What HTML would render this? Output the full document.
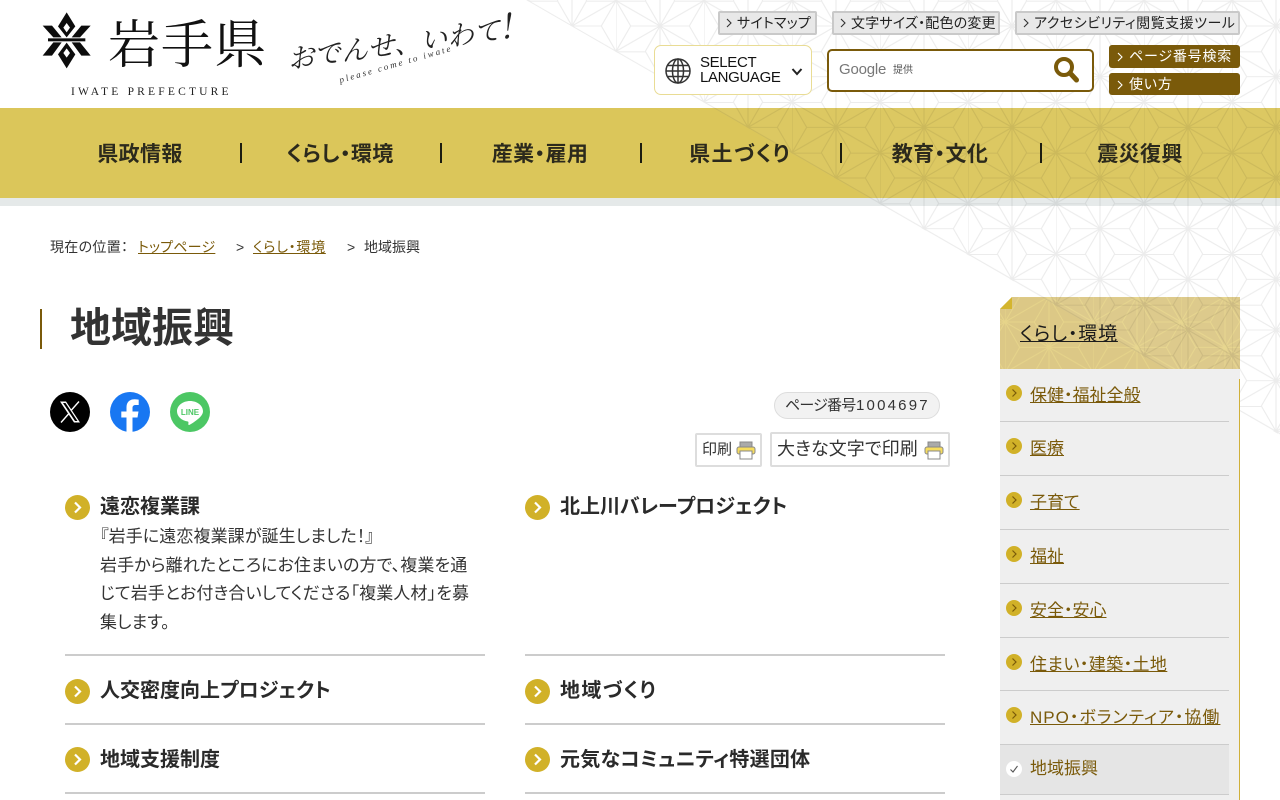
<!DOCTYPE html>
<html lang="ja">
<head>
<meta charset="utf-8">
<title>地域振興 - 岩手県</title>
<style>
html,body{margin:0;padding:0;background:#fff}
body{width:1280px;height:800px;overflow:hidden;position:relative;font-family:"Liberation Sans","Noto Sans CJK JP",sans-serif;color:#333;font-feature-settings:"palt"}
.a{position:absolute;white-space:nowrap}
a{color:inherit}
.tb{position:absolute;top:11px;height:20px;background:#e8e8e8;border:2px solid #c9c9c9;border-radius:2px;font-size:14px;line-height:20px;color:#222;white-space:nowrap;box-sizing:content-box}
.tb svg{position:absolute;left:5px;top:5px}
.tb span{position:absolute;left:17px;top:0}
.bb{position:absolute;left:1109px;width:131px;background:#7a5a0a;border-radius:3px;color:#fff;font-size:14px;white-space:nowrap}
.bb svg{position:absolute;left:7px;top:7px}
.bb span{position:absolute;left:20px;letter-spacing:.8px}
.nav{position:absolute;top:141px;width:200px;text-align:center;font-size:21px;font-weight:700;line-height:28px;color:#2c2a1c;letter-spacing:.4px}
.sep{position:absolute;top:143px;width:2px;height:20px;background:#1c1c10}
.ci{position:absolute;width:25px;height:25px}
.ttl{position:absolute;font-size:20px;font-weight:700;line-height:26px;color:#2a2a2a;white-space:nowrap}
.ln{position:absolute;width:420px;height:2px;background:#ccc}
.bt{position:absolute;left:100px;font-size:17px;line-height:28.5px;color:#333;white-space:nowrap;letter-spacing:.1px}
.si{position:absolute;left:1030px;font-size:17px;line-height:24px;color:#7a5a0a;white-space:nowrap;text-decoration:underline;z-index:5}
.sl{position:absolute;left:1000px;width:229px;height:1px;background:#ccc;z-index:5}
.sb{position:absolute;left:1006px;width:16px;height:16px;z-index:5}
.bc{position:absolute;top:238px;font-size:14px;line-height:18px;color:#333;white-space:nowrap}
</style>
</head>
<body>

<!-- nav bands -->
<div class="a" style="left:0;top:108px;width:1280px;height:90px;background:#dbc65a"></div>
<div class="a" style="left:0;top:198px;width:1280px;height:8px;background:#e5e9e9"></div>

<!-- sidebar header -->
<svg class="a" style="left:1000px;top:297px;z-index:1" width="240" height="72" viewBox="1000 297 240 72">
<defs>
<pattern id="p2" patternUnits="userSpaceOnUse" width="88" height="50.667" x="1005" y="322">
<path stroke="#e6d48a" stroke-width="1" fill="none" d="M0 0V50.67M44 0V50.67M0 0L44 25.33L88 0M0 50.67L44 25.33L88 50.67M14.67 25.33L0 0M14.67 25.33L0 50.67M14.67 25.33H73.33M73.33 25.33L88 0M73.33 25.33L88 50.67M29.33 0H0M29.33 0L44 25.33M58.67 0H88M58.67 0L44 25.33M29.33 50.67H0M29.33 50.67L44 25.33M58.67 50.67H88M58.67 50.67L44 25.33"/>
</pattern>
</defs>
<rect x="1000" y="297" width="240" height="72" fill="#dcc886"/>
<rect x="1000" y="297" width="240" height="72" fill="url(#p2)"/>
<polygon points="1000,297 1012,297 1000,309" fill="#fff"/>
<polygon points="1000,309 1012,297 1012,309" fill="#d4b52e"/>
</svg>

<!-- asanoha overlay -->
<svg class="a" style="left:0;top:0;z-index:2" width="1280" height="800">
<defs>
<pattern id="p1" patternUnits="userSpaceOnUse" width="88" height="50.667" x="0" y="0.67">
<path stroke="#000" stroke-opacity=".075" stroke-width="1.100" fill="none" d="M0 0V50.67M44 0V50.67M0 0L44 25.33L88 0M0 50.67L44 25.33L88 50.67M14.67 25.33L0 0M14.67 25.33L0 50.67M14.67 25.33H73.33M73.33 25.33L88 0M73.33 25.33L88 50.67M29.33 0.500H0M29.33 0L44 25.33M58.67 0.500H88M58.67 0L44 25.33M29.33 50.67L44 25.33M58.67 50.67L44 25.33"/>
</pattern>
</defs>
<polygon points="526,0 1280,0 1280,435" fill="#fff" fill-opacity=".05"/>
<polygon points="526,0 1280,0 1280,435" fill="url(#p1)"/>
</svg>

<!-- logo -->
<svg class="a" style="left:30px;top:5px;z-index:3" width="100" height="70" viewBox="0 0 300 210">
<g fill="#0c0c0c" fill-rule="evenodd">
<path d="M110 22L136 64L110 97L84 64ZM110 54L100 68L110 82L120 68Z"/>
<path d="M110 190L136 148L110 113L84 148ZM110 158L100 144L110 130L120 144Z"/>
<rect x="54" y="100" width="112" height="9"/>
<path d="M38 62H66L95 97H70Z"/><path d="M182 62H154L125 97H150Z"/>
<path d="M38 152H66L95 112H70Z"/><path d="M182 152H154L125 112H150Z"/>
</g>
</svg>
<div class="a" style="left:108px;top:9px;font:400 52px/64px 'Noto Serif CJK SC','Noto Serif CJK JP',serif;color:#111;letter-spacing:1px;z-index:3">岩手県</div>
<div class="a" style="left:71px;top:85px;font:400 11.500px/14px 'Liberation Serif',serif;letter-spacing:3.200px;color:#222;z-index:3">IWATE PREFECTURE</div>
<div class="a" style="left:287px;top:35px;font:italic 400 27px/40px 'Noto Serif CJK JP','Noto Serif CJK SC',serif;color:#222;transform:rotate(-8deg);transform-origin:0 20px;z-index:3">おでんせ、いわて<span style="font-size:34px">!</span></div>
<div class="a" style="left:340px;top:74px;font:italic 400 9px/12px 'Liberation Serif',serif;letter-spacing:2.100px;color:#333;transform:rotate(-16deg);transform-origin:0 8px;z-index:3">please come to iwate</div>

<!-- top buttons -->
<div class="tb" style="left:718px;width:95px;z-index:3"><svg width="8" height="10" viewBox="0 0 8 10"><path d="M2 1l4 4-4 4" fill="none" stroke="#333" stroke-width="1.100"/></svg><span style="letter-spacing:.2px">サイトマップ</span></div>
<div class="tb" style="left:832px;width:164px;z-index:3"><svg width="8" height="10" viewBox="0 0 8 10"><path d="M2 1l4 4-4 4" fill="none" stroke="#333" stroke-width="1.100"/></svg><span style="letter-spacing:.2px">文字サイズ・配色の変更</span></div>
<div class="tb" style="left:1015px;width:221px;z-index:3"><svg width="8" height="10" viewBox="0 0 8 10"><path d="M2 1l4 4-4 4" fill="none" stroke="#333" stroke-width="1.100"/></svg><span style="letter-spacing:.5px">アクセシビリティ閲覧支援ツール</span></div>

<!-- language -->
<div class="a" style="left:654px;top:45px;width:156px;height:48px;background:#fff;border:1px solid #e9dc94;border-radius:7px;z-index:3"></div>
<svg class="a" style="left:664px;top:57px;z-index:4" width="28" height="28" viewBox="0 0 28 28"><g fill="none" stroke="#333" stroke-width="1.500"><circle cx="14" cy="14" r="12"/><ellipse cx="14" cy="14" rx="5.500" ry="12"/><path d="M14 2V26M2 14H26M3.500 8.500H24.500M3.500 19.500H24.500"/></g></svg>
<div class="a" style="left:700px;top:56px;font-size:15px;line-height:14.500px;color:#111;letter-spacing:-.35px;z-index:4">SELECT<br>LANGUAGE</div>
<svg class="a" style="left:791px;top:67px;z-index:4" width="12" height="10" viewBox="0 0 12 10"><path d="M1.500 2L6 7L10.500 2" fill="none" stroke="#222" stroke-width="2"/></svg>

<!-- search -->
<div class="a" style="left:827px;top:49px;width:263px;height:39px;background:#fff;border:2px solid #7a5a0a;border-radius:5px;z-index:3"></div>
<div class="a" style="left:839px;top:60px;font-size:15px;line-height:19px;color:#777;z-index:4;letter-spacing:-.2px">Google</div>
<div class="a" style="left:893px;top:64px;font-size:10px;line-height:14px;color:#555;z-index:4">提供</div>
<svg class="a" style="left:1052px;top:56px;z-index:4" width="27" height="27" viewBox="0 0 27 27"><circle cx="12" cy="11" r="8" fill="none" stroke="#7a5a0a" stroke-width="4"/><path d="M18 17L24.500 24" stroke="#7a5a0a" stroke-width="5" stroke-linecap="round"/></svg>

<div class="bb" style="top:45px;height:23px;z-index:3"><svg width="8" height="10" viewBox="0 0 8 10"><path d="M2 1l4 4-4 4" fill="none" stroke="#fff" stroke-width="1.100"/></svg><span style="line-height:22px">ページ番号検索</span></div>
<div class="bb" style="top:73px;height:22px;z-index:3"><svg width="8" height="10" viewBox="0 0 8 10"><path d="M2 1l4 4-4 4" fill="none" stroke="#fff" stroke-width="1.100"/></svg><span style="line-height:22px">使い方</span></div>

<!-- nav -->
<div style="position:relative;z-index:3">
<div class="nav" style="left:40px">県政情報</div>
<div class="sep" style="left:240px"></div>
<div class="nav" style="left:240px">くらし・環境</div>
<div class="sep" style="left:440px"></div>
<div class="nav" style="left:440px">産業・雇用</div>
<div class="sep" style="left:640px"></div>
<div class="nav" style="left:640px;letter-spacing:1.500px">県土づくり</div>
<div class="sep" style="left:840px"></div>
<div class="nav" style="left:840px">教育・文化</div>
<div class="sep" style="left:1040px"></div>
<div class="nav" style="left:1040px">震災復興</div>
</div>

<!-- breadcrumb -->
<div class="bc" style="left:50px;letter-spacing:.3px">現在の位置：</div>
<div class="bc" style="left:138px;color:#7a5a0a;text-decoration:underline;letter-spacing:.2px">トップページ</div>
<div class="bc" style="left:236px">&gt;</div>
<div class="bc" style="left:253px;color:#7a5a0a;text-decoration:underline;letter-spacing:.7px">くらし・環境</div>
<div class="bc" style="left:347px">&gt;</div>
<div class="bc" style="left:364px">地域振興</div>

<!-- h1 -->
<div class="a" style="left:40px;top:309px;width:2px;height:40px;background:#7a5a0a"></div>
<div class="a" style="left:70px;top:302px;font-size:41px;font-weight:700;line-height:52px;color:#333">地域振興</div>

<!-- social -->
<svg class="a" style="left:50px;top:392px" width="40" height="40" viewBox="0 0 40 40"><circle cx="20" cy="20" r="20" fill="#000"/><path d="M10 9.500H16L30 30.500H24ZM13 11L25 29H27.500L15.500 11Z" fill="#fff" fill-rule="evenodd"/><path d="M29 9.500L21.500 18M18.500 22L11 30.500" stroke="#fff" stroke-width="1.400" fill="none"/></svg>
<svg class="a" style="left:110px;top:392px" width="40" height="40" viewBox="0 0 40 40"><circle cx="20" cy="20" r="20" fill="#1877f2"/><path d="M22.500 40V25.500H27.500L28.500 19.500H22.500V16C22.500 14.200 23.400 13 25.500 13H28.700V7.600C28.700 7.600 26.500 7.200 24.500 7.200C19.800 7.200 16.500 10 16.500 15.200V19.500H11.300V25.500H16.500V40Z" fill="#fff"/></svg>
<svg class="a" style="left:170px;top:392px" width="40" height="40" viewBox="0 0 40 40"><circle cx="20" cy="20" r="20" fill="#4cc764"/><path d="M20 9C12.800 9 7 13.600 7 19.300C7 24.400 11.600 28.700 17.800 29.500C18.900 29.800 18.300 31.500 18.300 32.300C18.300 33 19 33.200 20 32.600C21.500 31.700 27.700 27.800 30.400 24.700C32.100 22.900 33 21.200 33 19.300C33 13.600 27.200 9 20 9Z" fill="#fff"/><text x="20" y="23" text-anchor="middle" font-family="Liberation Sans" font-weight="700" font-size="8" fill="#4cc764">LINE</text></svg>

<!-- page number -->
<div class="a" style="left:774px;top:392px;width:164px;height:25px;background:#f2f2f2;border:1px solid #ddd;border-radius:14px;font-size:15px;line-height:25px;color:#333"><span style="position:absolute;left:10px;letter-spacing:-.8px">ページ番号</span><span style="position:absolute;left:81px;letter-spacing:2.200px">1004697</span></div>

<!-- print -->
<div class="a" style="left:695px;top:433px;width:63px;height:30px;border:2px solid #ddd;border-radius:2px;font-size:15px;line-height:30px;color:#333"><span style="position:absolute;left:5px">印刷</span>
<svg style="position:absolute;left:39px;top:6px" width="20" height="19" viewBox="0 0 20 19"><rect x="4" y="1" width="12" height="6" fill="#aaa" stroke="#888" stroke-width="1"/><rect x="1" y="6" width="18" height="7" rx="2" fill="#f6dc5e" stroke="#888" stroke-width="1"/><rect x="4" y="10" width="12" height="8" fill="#fff" stroke="#888" stroke-width="1"/></svg></div>
<div class="a" style="left:770px;top:432px;width:176px;height:31px;border:2px solid #ddd;border-radius:2px;font-size:18px;line-height:31px;color:#333"><span style="position:absolute;left:5px;letter-spacing:.1px">大きな文字で印刷</span>
<svg style="position:absolute;left:152px;top:7px" width="20" height="19" viewBox="0 0 20 19"><rect x="4" y="1" width="12" height="6" fill="#aaa" stroke="#888" stroke-width="1"/><rect x="1" y="6" width="18" height="7" rx="2" fill="#f6dc5e" stroke="#888" stroke-width="1"/><rect x="4" y="10" width="12" height="8" fill="#fff" stroke="#888" stroke-width="1"/></svg></div>

<!-- list -->
<svg class="ci" style="left:65px;top:495px" viewBox="0 0 25 25"><circle cx="12.500" cy="12.500" r="12.500" fill="#d1b128"/><path d="M10 7.500L15 12.500L10 17.500" fill="none" stroke="#fff" stroke-width="2.200"/></svg>
<div class="ttl" style="left:100px;top:494px">遠恋複業課</div>
<div class="bt" style="top:523px">『岩手に遠恋複業課が誕生しました！』<br>岩手から離れたところにお住まいの方で、複業を通<br>じて岩手とお付き合いしてくださる「複業人材」を募<br>集します。</div>

<svg class="ci" style="left:525px;top:495px" viewBox="0 0 25 25"><circle cx="12.500" cy="12.500" r="12.500" fill="#d1b128"/><path d="M10 7.500L15 12.500L10 17.500" fill="none" stroke="#fff" stroke-width="2.200"/></svg>
<div class="ttl" style="left:560px;top:494px">北上川バレープロジェクト</div>

<div class="ln" style="left:65px;top:654px"></div>
<div class="ln" style="left:525px;top:654px"></div>

<svg class="ci" style="left:65px;top:679px" viewBox="0 0 25 25"><circle cx="12.500" cy="12.500" r="12.500" fill="#d1b128"/><path d="M10 7.500L15 12.500L10 17.500" fill="none" stroke="#fff" stroke-width="2.200"/></svg>
<div class="ttl" style="left:100px;top:678px">人交密度向上プロジェクト</div>
<svg class="ci" style="left:525px;top:679px" viewBox="0 0 25 25"><circle cx="12.500" cy="12.500" r="12.500" fill="#d1b128"/><path d="M10 7.500L15 12.500L10 17.500" fill="none" stroke="#fff" stroke-width="2.200"/></svg>
<div class="ttl" style="left:560px;top:678px;letter-spacing:1.400px">地域づくり</div>

<div class="ln" style="left:65px;top:723px"></div>
<div class="ln" style="left:525px;top:723px"></div>

<svg class="ci" style="left:65px;top:747px" viewBox="0 0 25 25"><circle cx="12.500" cy="12.500" r="12.500" fill="#d1b128"/><path d="M10 7.500L15 12.500L10 17.500" fill="none" stroke="#fff" stroke-width="2.200"/></svg>
<div class="ttl" style="left:100px;top:747px">地域支援制度</div>
<svg class="ci" style="left:525px;top:747px" viewBox="0 0 25 25"><circle cx="12.500" cy="12.500" r="12.500" fill="#d1b128"/><path d="M10 7.500L15 12.500L10 17.500" fill="none" stroke="#fff" stroke-width="2.200"/></svg>
<div class="ttl" style="left:560px;top:747px;letter-spacing:.25px">元気なコミュニティ特選団体</div>

<div class="ln" style="left:65px;top:792px"></div>
<div class="ln" style="left:525px;top:792px"></div>

<!-- sidebar -->
<div class="a" style="left:1020px;top:322px;font-size:19px;line-height:26px;color:#1c1c1c;text-decoration:underline;letter-spacing:.8px;z-index:5">くらし・環境</div>
<div class="a" style="left:1000px;top:369px;width:240px;height:431px;background:#efefef;z-index:4"></div>
<div class="a" style="left:1239px;top:379px;width:1px;height:421px;background:#cfb03a;z-index:5"></div>
<div class="a" style="left:1000px;top:745px;width:229px;height:49px;background:#e5e5e5;z-index:5"></div>

<svg class="sb" style="top:385px" viewBox="0 0 16 16"><circle cx="8" cy="8" r="8" fill="#d1b128"/><path d="M6.500 4.500L10 8L6.500 11.500" fill="none" stroke="#7a5a0a" stroke-width="1.200"/></svg>
<div class="si" style="top:384px">保健・福祉全般</div>
<div class="sl" style="top:421px"></div>
<svg class="sb" style="top:438px" viewBox="0 0 16 16"><circle cx="8" cy="8" r="8" fill="#d1b128"/><path d="M6.500 4.500L10 8L6.500 11.500" fill="none" stroke="#7a5a0a" stroke-width="1.200"/></svg>
<div class="si" style="top:437px">医療</div>
<div class="sl" style="top:475px"></div>
<svg class="sb" style="top:492px" viewBox="0 0 16 16"><circle cx="8" cy="8" r="8" fill="#d1b128"/><path d="M6.500 4.500L10 8L6.500 11.500" fill="none" stroke="#7a5a0a" stroke-width="1.200"/></svg>
<div class="si" style="top:491px">子育て</div>
<div class="sl" style="top:529px"></div>
<svg class="sb" style="top:546px" viewBox="0 0 16 16"><circle cx="8" cy="8" r="8" fill="#d1b128"/><path d="M6.500 4.500L10 8L6.500 11.500" fill="none" stroke="#7a5a0a" stroke-width="1.200"/></svg>
<div class="si" style="top:545px">福祉</div>
<div class="sl" style="top:583px"></div>
<svg class="sb" style="top:600px" viewBox="0 0 16 16"><circle cx="8" cy="8" r="8" fill="#d1b128"/><path d="M6.500 4.500L10 8L6.500 11.500" fill="none" stroke="#7a5a0a" stroke-width="1.200"/></svg>
<div class="si" style="top:599px">安全・安心</div>
<div class="sl" style="top:637px"></div>
<svg class="sb" style="top:654px" viewBox="0 0 16 16"><circle cx="8" cy="8" r="8" fill="#d1b128"/><path d="M6.500 4.500L10 8L6.500 11.500" fill="none" stroke="#7a5a0a" stroke-width="1.200"/></svg>
<div class="si" style="top:653px;letter-spacing:.4px">住まい・建築・土地</div>
<div class="sl" style="top:690px"></div>
<svg class="sb" style="top:707px" viewBox="0 0 16 16"><circle cx="8" cy="8" r="8" fill="#d1b128"/><path d="M6.500 4.500L10 8L6.500 11.500" fill="none" stroke="#7a5a0a" stroke-width="1.200"/></svg>
<div class="si" style="top:706px;letter-spacing:1px">NPO・ボランティア・協働</div>
<div class="sl" style="top:744px"></div>
<svg class="sb" style="top:761px" viewBox="0 0 16 16"><circle cx="8" cy="8" r="8" fill="#fff"/><path d="M4.500 8.500L7 11L11.500 5" fill="none" stroke="#555" stroke-width="1.100"/></svg>
<div class="si" style="top:757px;text-decoration:none">地域振興</div>
<div class="sl" style="top:794px"></div>

</body>
</html>
